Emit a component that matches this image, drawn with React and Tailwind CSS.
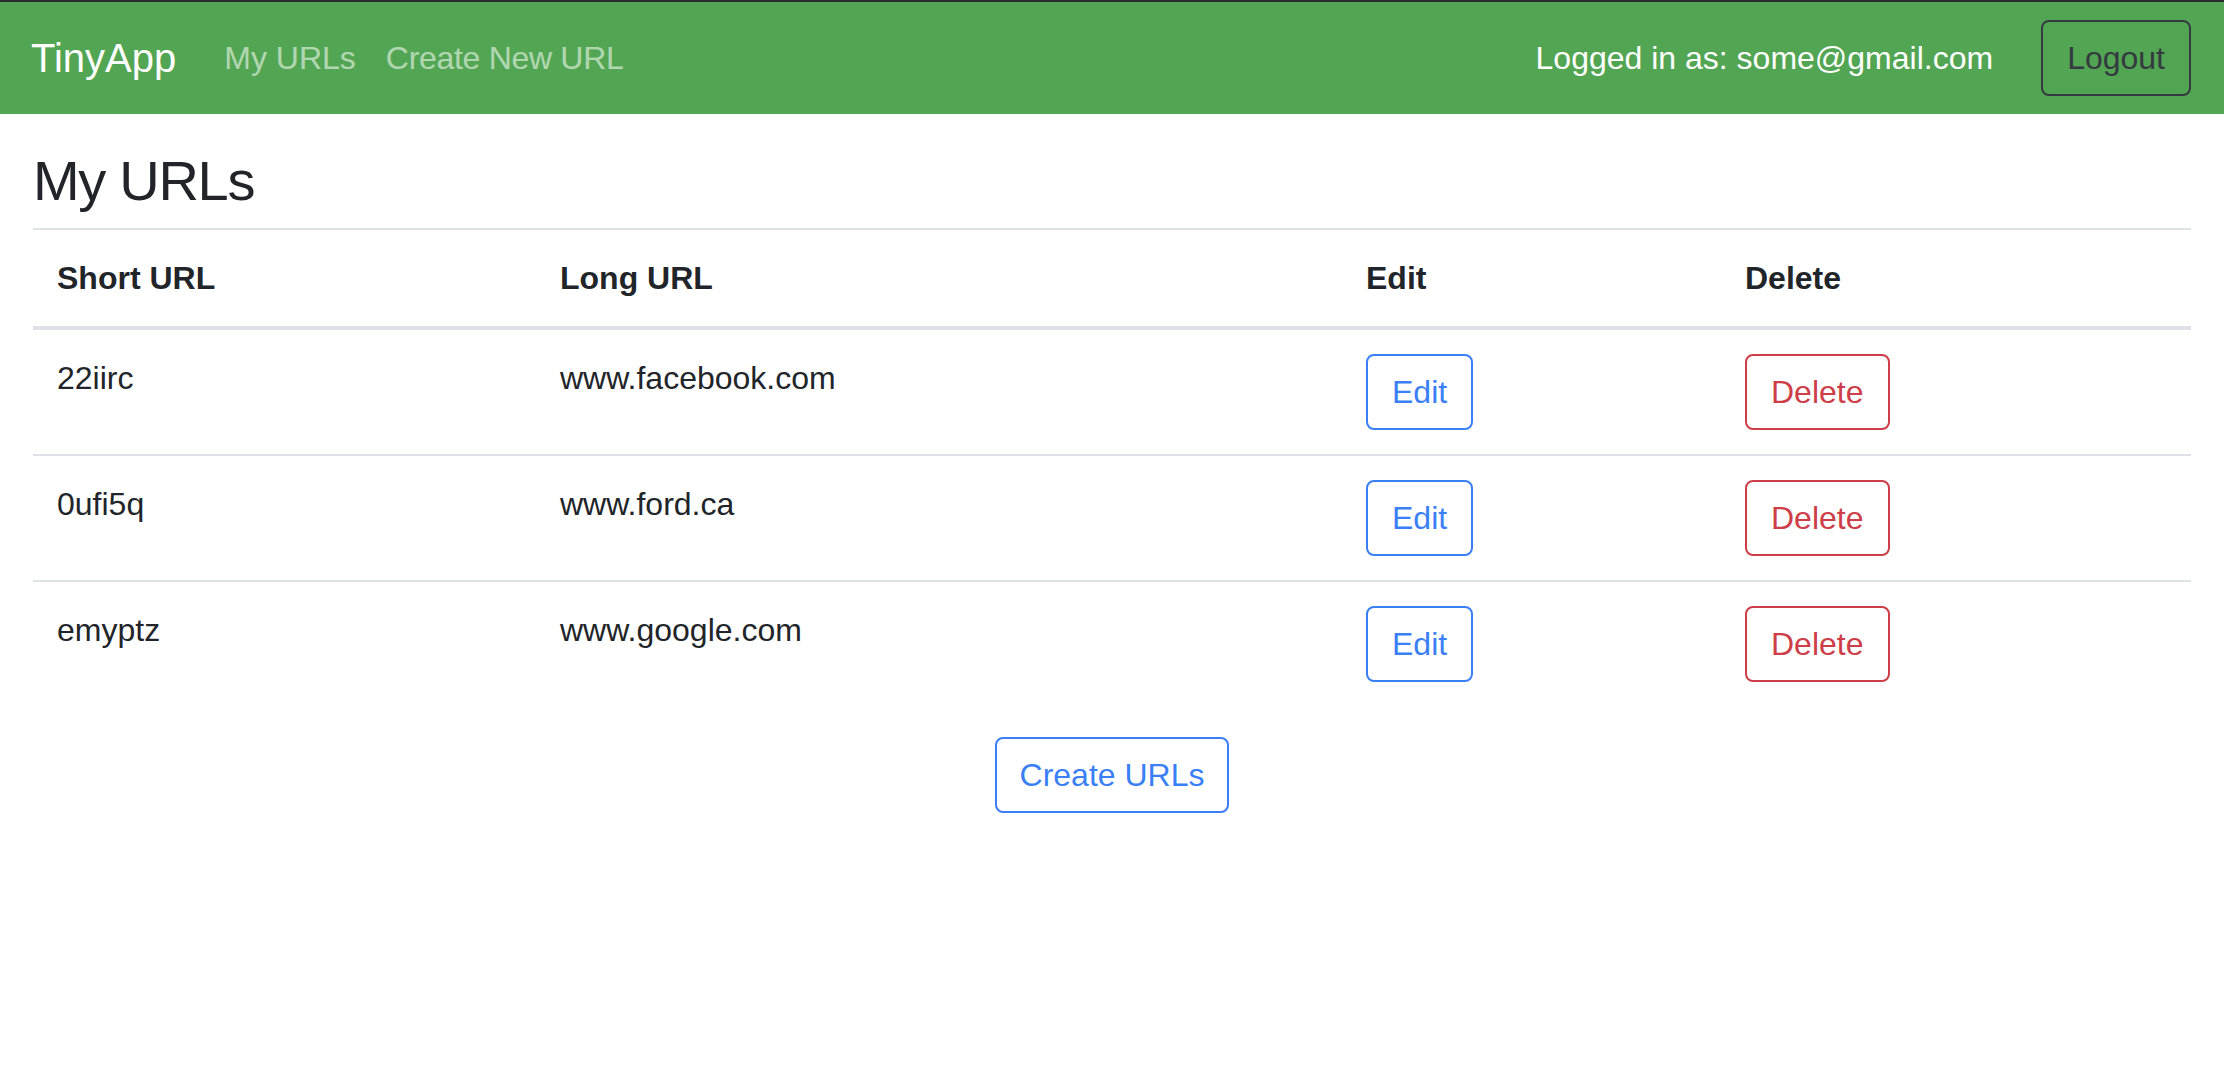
const urls = [
  { short: "22iirc", long: "www.facebook.com" },
  { short: "0ufi5q", long: "www.ford.ca" },
  { short: "emyptz", long: "www.google.com" },
];

const App = () => {
  return (
    <div className="min-h-screen bg-white text-[32px] leading-[48px] text-[#212529] font-['Liberation_Sans',Arial,sans-serif]">
      <div className="h-[2px] bg-[#2b2b2b]" />
      <nav className="h-[112px] bg-[#52a552] flex items-center pl-[31px] pr-[33px]">
        <a href="#" className="text-[40px] leading-[60px] text-white mr-[32px]">
          TinyApp
        </a>
        <a href="#" className="px-[16px] text-white/55">
          My URLs
        </a>
        <a href="#" className="pl-[14px] pr-[16px] text-white/55 tracking-[-0.3px]">
          Create New URL
        </a>
        <div className="ml-auto flex items-center gap-[48px]">
          <span className="text-white">Logged in as: some@gmail.com</span>
          <button className="h-[76px] px-[24px] border-2 border-[#343a40] rounded-[8px] text-[#343a40]">
            Logout
          </button>
        </div>
      </nav>

      <main className="px-[33px]">
        <h1 className="mt-[33px] mb-[14px] text-[56px] leading-[67px] font-medium tracking-[-1.3px]">
          My URLs
        </h1>
        <table className="w-full table-fixed border-collapse">
          <colgroup>
            <col className="w-[503px]" />
            <col className="w-[806px]" />
            <col className="w-[379px]" />
            <col className="w-[470px]" />
          </colgroup>
          <thead>
            <tr className="border-t-2 border-[#dee2e6]">
              <th className="p-[24px] text-left font-bold border-b-4 border-[#dee2e6]">Short URL</th>
              <th className="p-[24px] text-left font-bold border-b-4 border-[#dee2e6]">Long URL</th>
              <th className="p-[24px] text-left font-bold border-b-4 border-[#dee2e6]">Edit</th>
              <th className="p-[24px] text-left font-bold border-b-4 border-[#dee2e6]">Delete</th>
            </tr>
          </thead>
          <tbody>
            {urls.map((u, i) => (
              <tr key={u.short} className={i === 0 ? "" : "border-t-2 border-[#dee2e6]"}>
                <td className="p-[24px] align-top">{u.short}</td>
                <td className="p-[24px] align-top">{u.long}</td>
                <td className="p-[24px] align-top">
                  <button className="h-[76px] px-[24px] border-2 border-[#3a7ff6] rounded-[8px] text-[#3a7ff6]">
                    Edit
                  </button>
                </td>
                <td className="p-[24px] align-top">
                  <button className="h-[76px] px-[24px] border-2 border-[#cd3e48] rounded-[8px] text-[#cd3e48]">
                    Delete
                  </button>
                </td>
              </tr>
            ))}
          </tbody>
        </table>
        <div className="mt-[31px] flex justify-center">
          <button className="h-[76px] px-[23px] border-2 border-[#3a7ff6] rounded-[8px] text-[#3a7ff6]">
            Create URLs
          </button>
        </div>
      </main>
    </div>
  );
};

export default App;
